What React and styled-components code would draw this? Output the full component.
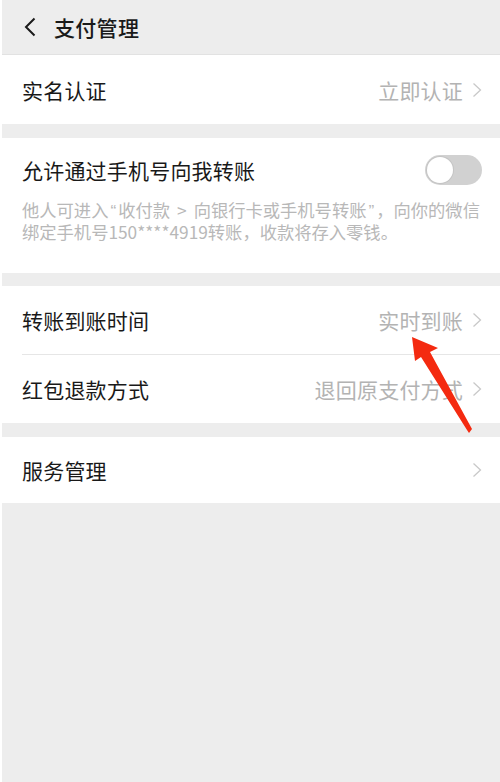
import styled, { createGlobalStyle } from "styled-components"

const GlobalStyle = createGlobalStyle`
  html, body {
    margin: 0;
    padding: 0;
    background: #ededed;
  }
  body {
    font-family: "Noto Sans CJK SC", "Noto Sans", sans-serif;
  }
`

const Page = styled.div`
  position: relative;
  min-height: 782px;
  width: 500px;
  background: #ededed;
  border-left: 2px solid #fff;
  box-sizing: border-box;
`

const Header = styled.header`
  display: flex;
  align-items: center;
  height: 55px;
  padding-left: 21px;
  box-sizing: border-box;
  border-bottom: 1px solid #e2e2e2;
`

const BackIcon = styled.svg`
  width: 14px;
  height: 20px;
  margin-right: 17px;
`

const HeaderTitle = styled.h1`
  margin: 0;
  font-size: 21px;
  font-weight: 500;
  color: #1a1a1a;
  letter-spacing: 0.3px;
`

const Group = styled.section`
  background: #fff;
  margin-bottom: ${(p) => p.$gap || 14}px;
`

const Row = styled.div`
  display: flex;
  align-items: center;
  justify-content: space-between;
  height: ${(p) => p.$h || 68}px;
  padding: 0 18px 0 20px;
`

const Label = styled.span`
  font-size: 21px;
  color: #191919;
  letter-spacing: 0.2px;
`

const Value = styled.span`
  display: flex;
  align-items: center;
  gap: 9px;
  font-size: 21px;
  color: #b3b3b3;
  letter-spacing: 0.2px;
`

const Chevron = styled.svg`
  width: 10px;
  height: 16px;
`

const Divider = styled.div`
  height: 1px;
  margin-left: 20px;
  background: #e6e6e6;
`

const ToggleBlock = styled.div`
  padding: 16px 18px 30px 20px;
`

const ToggleHead = styled.div`
  display: flex;
  align-items: center;
  justify-content: space-between;
  height: 32px;
`

const Switch = styled.div`
  position: relative;
  width: 57px;
  height: 30px;
  border-radius: 15px;
  background: #d1d1d1;
  box-sizing: border-box;
`

const Knob = styled.div`
  position: absolute;
  left: 2px;
  top: 2px;
  width: 26px;
  height: 26px;
  border-radius: 50%;
  background: #fff;
  box-shadow: 0 0 0 1px #c4c4c4;
`

const Note = styled.div`
  margin-top: 13px;
  font-size: 17.3px;
  color: #b8b8b8;
`

const NoteLine = styled.div`
  height: 22px;
  line-height: 22px;
  white-space: nowrap;
`

const Mark = styled.span`
  font-family: "Liberation Sans", sans-serif;
  line-height: 1;
  margin: 0 2px;
`

const Gt = styled.span`
  margin: 0 7px;
`

const Arrow = styled.svg`
  position: absolute;
  left: 0;
  top: 0;
  width: 500px;
  height: 782px;
  pointer-events: none;
`

const Caret = () => (
  <Chevron viewBox="0 0 10 16">
    <path d="M1.5 1.5 L8.5 8 L1.5 14.5" fill="none" stroke="#c9c9c9" strokeWidth="1.3" />
  </Chevron>
)

export default function App() {
  return (
    <Page>
      <GlobalStyle />
      <Header>
        <BackIcon viewBox="0 0 14 20">
          <path d="M11.5 1.5 L3 10 L11.5 18.5" fill="none" stroke="#1a1a1a" strokeWidth="2" />
        </BackIcon>
        <HeaderTitle>支付管理</HeaderTitle>
      </Header>

      <Group>
        <Row $h={69}>
          <Label>实名认证</Label>
          <Value>
            立即认证
            <Caret />
          </Value>
        </Row>
      </Group>

      <Group $gap={13}>
        <ToggleBlock>
          <ToggleHead>
            <Label>允许通过手机号向我转账</Label>
            <Switch>
              <Knob />
            </Switch>
          </ToggleHead>
          <Note>
            <NoteLine>
              他人可进入<Mark>“</Mark>收付款<Gt>&gt;</Gt>向银行卡或手机号转账<Mark>”</Mark>，向你的微信
            </NoteLine>
            <NoteLine>绑定手机号150****4919转账，收款将存入零钱。</NoteLine>
          </Note>
        </ToggleBlock>
      </Group>

      <Group>
        <Row>
          <Label>转账到账时间</Label>
          <Value>
            实时到账
            <Caret />
          </Value>
        </Row>
        <Divider />
        <Row>
          <Label>红包退款方式</Label>
          <Value>
            退回原支付方式
            <Caret />
          </Value>
        </Row>
      </Group>

      <Group>
        <Row $h={66}>
          <Label>服务管理</Label>
          <Value>
            <Caret />
          </Value>
        </Row>
      </Group>

      <Arrow viewBox="0 0 500 782">
        <polygon
          points="410,337 436,348 428,352 470,429 467,433 465,430 419,357 413,361"
          fill="#f42a10"
        />
      </Arrow>
    </Page>
  )
}
